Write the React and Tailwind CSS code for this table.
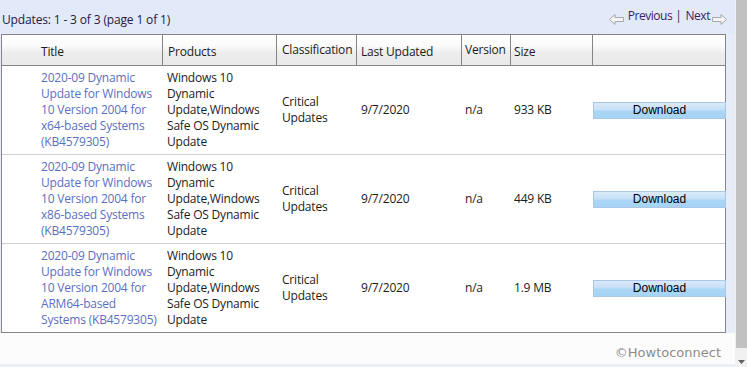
import React from "react";

const rows = [
  {
    title: ["2020-09 Dynamic", "Update for Windows", "10 Version 2004 for", "x64-based Systems", "(KB4579305)"],
    size: "933 KB",
  },
  {
    title: ["2020-09 Dynamic", "Update for Windows", "10 Version 2004 for", "x86-based Systems", "(KB4579305)"],
    size: "449 KB",
  },
  {
    title: ["2020-09 Dynamic", "Update for Windows", "10 Version 2004 for", "ARM64-based", "Systems (KB4579305)"],
    size: "1.9 MB",
  },
];

const products = ["Windows 10", "Dynamic", "Update,Windows", "Safe OS Dynamic", "Update"];

function LeftArrow() {
  return (
    <svg width="15" height="11" viewBox="0 0 15 11" className="block">
      <polygon
        points="0.5,5.5 6,0.5 6,3.5 14.5,3.5 14.5,7.5 6,7.5 6,10.5"
        fill="#f4f4f4"
        stroke="#a8a8a8"
        strokeWidth="1"
      />
    </svg>
  );
}

function RightArrow() {
  return (
    <svg width="15" height="11" viewBox="0 0 15 11" className="block">
      <polygon
        points="14.5,5.5 9,0.5 9,3.5 0.5,3.5 0.5,7.5 9,7.5 9,10.5"
        fill="#f4f4f4"
        stroke="#a8a8a8"
        strokeWidth="1"
      />
    </svg>
  );
}

export default function App() {
  return (
    <div
      className="w-[747px] h-[367px] flex overflow-hidden text-[12px] leading-[16px]"
      style={{ fontFamily: '"Open Sans", "Noto Sans", sans-serif' }}
    >
      <div className="w-[735px] h-full flex flex-col bg-[#e6ecf8]">
        {/* top bar */}
        <div className="h-[34px] flex items-end justify-between pl-[2px] pr-[8px] pb-[6px] bg-[#e2e9f8]">
          <div className="text-[#231a45] tracking-[-0.15px]">Updates: 1 - 3 of 3 (page 1 of 1)</div>
          <div className="flex items-center text-[#3a1f68] tracking-[-0.45px] mb-[3px]">
            <div className="mt-[7px] mr-[4px]"><LeftArrow /></div>
            <span>Previous</span>
            <span className="ml-[3px] mr-[4px]">|</span>
            <span>Next</span>
            <div className="mt-[7px] ml-[2px]"><RightArrow /></div>
          </div>
        </div>

        {/* table */}
        <div className="ml-[1px] w-[725px] border border-[#858585] bg-white text-[#1c1c1c] tracking-[-0.2px]">
          {/* header */}
          <div className="flex h-[31px] border-b border-[#858585] bg-[linear-gradient(to_bottom,#ffffff_0%,#fbfbfb_35%,#ededed_60%,#e9e9e9_100%)]">
            <div className="w-[160px] pl-[39px] flex items-center pt-[3px]">Title</div>
            <div className="w-[114px] border-l border-[#858585] pl-[5px] flex items-center pt-[3px]">Products</div>
            <div className="w-[80px] border-l border-[#858585] pl-[5px] flex items-center pb-[1px]">Classification</div>
            <div className="w-[105px] border-l border-[#858585] pl-[4px] flex items-center pt-[3px]">Last Updated</div>
            <div className="w-[49px] border-l border-[#858585] pl-[3px] flex items-center pb-[1px]">Version</div>
            <div className="w-[82px] border-l border-[#858585] pl-[3px] flex items-center pt-[3px]">Size</div>
            <div className="w-[133px] border-l border-[#858585]"></div>
          </div>

          {rows.map((r, i) => (
            <div
              key={i}
              className={
                i < rows.length - 1
                  ? "flex h-[89px] items-center border-b border-[#cfcfcf]"
                  : "flex h-[88px] items-center"
              }
            >
              <div className="w-[160px] pl-[39px] text-[#5a6fbf] whitespace-nowrap">
                {r.title.map((t, j) => (
                  <div key={j}>{t}</div>
                ))}
              </div>
              <div className="w-[114px] pl-[5px] whitespace-nowrap">
                {products.map((t, j) => (
                  <div key={j}>{t}</div>
                ))}
              </div>
              <div className="w-[80px] pl-[6px] whitespace-nowrap">
                <div>Critical</div>
                <div>Updates</div>
              </div>
              <div className="w-[105px] pl-[5px]">9/7/2020</div>
              <div className="w-[49px] pl-[4px]">n/a</div>
              <div className="w-[82px] pl-[4px]">{r.size}</div>
              <div className="w-[132px] pl-[1px]">
                <div
                  className="h-[17px] w-[133px] border border-[#a9c6e6] bg-[linear-gradient(to_bottom,#dbeaf9_0%,#c6e0f7_45%,#aad6f5_55%,#a6d4f5_100%)] flex items-center justify-center text-black tracking-normal"
                  style={{ fontFamily: '"Liberation Sans", Arial, sans-serif' }}
                >
                  Download
                </div>
              </div>
            </div>
          ))}
        </div>

        {/* bottom */}
        <div className="flex-1 flex flex-col bg-[#fcfcfd]">
          <div className="flex-1 flex items-end justify-end pr-[14px] pb-[3px]">
            <span
              className="text-[#8c8c8c] text-[13px] tracking-[0px]"
              style={{ fontFamily: '"DejaVu Sans", "Noto Sans", sans-serif' }}
            >
              ©Howtoconnect
            </span>
          </div>
          <div className="h-[3px] bg-[#eceff6]"></div>
        </div>
      </div>

      {/* scrollbar */}
      <div className="w-[12px] h-full flex flex-col bg-[#f0f0f0]">
        <div className="h-[348px] ml-[1px] bg-[#c1c1c1]"></div>
        <div className="flex-1 flex items-end justify-center pb-[3px]">
          <svg width="7" height="4" viewBox="0 0 7 4" className="block">
            <polygon points="0,0 7,0 3.5,4" fill="#606060" />
          </svg>
        </div>
      </div>
    </div>
  );
}
